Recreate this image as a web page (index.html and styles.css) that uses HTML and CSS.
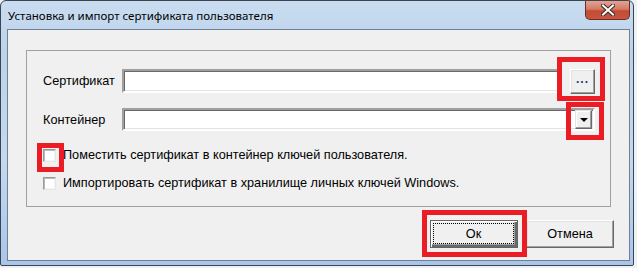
FILE: index.html
```html
<!DOCTYPE html>
<html lang="ru">
<head>
  <meta charset="UTF-8" />
  <title>Установка и импорт сертификата пользователя</title>
  <link rel="stylesheet" href="styles.css">
</head>
<body>
  <div class="window">
    <div class="titlebar">
      <span class="title">Установка и импорт сертификата пользователя</span>
      <div class="close-btn">
        <svg width="14" height="12" viewBox="0 0 14 12">
          <path d="M2 1.5 L12 10.5 M12 1.5 L2 10.5" stroke="#3b2a26" stroke-width="4" stroke-linecap="square" />
          <path d="M2 1.5 L12 10.5 M12 1.5 L2 10.5" stroke="#fff" stroke-width="2" stroke-linecap="square" />
        </svg>
      </div>
    </div>

    <div class="client">
      <div class="group">
        <div class="row">
          <label class="label">Сертификат</label>
          <div class="field"></div>
          <div class="btn-browse">...</div>
        </div>
        <div class="row row-combo">
          <label class="label">Контейнер</label>
          <div class="field combo">
            <div class="combo-arrow"><span class="tri"></span></div>
          </div>
        </div>
        <div class="check-row first">
          <span class="checkbox"></span>
          <span class="check-text">Поместить сертификат в контейнер ключей пользователя.</span>
        </div>
        <div class="check-row">
          <span class="checkbox"></span>
          <span class="check-text">Импортировать сертификат в хранилище личных ключей Windows.</span>
        </div>
      </div>

      <div class="buttons">
        <div class="btn btn-default"><span class="focus">Ок</span></div>
        <div class="btn">Отмена</div>
      </div>
    </div>

    <!-- красные рамки-пометки -->
    <div class="mark mark-browse"></div>
    <div class="mark mark-combo"></div>
    <div class="mark mark-check"></div>
    <div class="mark mark-ok"></div>
  </div>
</body>
</html>
```

FILE: styles.css
```css
body {
  margin: 0;
  background: #eef2f6;
  font-family: "Liberation Sans", Arial, sans-serif;
  font-size: 12.7px;
  color: #000;
}
.window {
  position: relative;
  width: 634px;
  height: 266px;
  box-sizing: border-box;
  border: 1px solid #3c4450;
  border-radius: 6px 6px 2px 2px;
  padding: 0 3px 4px 6px;
  background: linear-gradient(180deg, #c9dcf0 0%, #bcd3ec 20%, #c4d9f0 60%, #a9c6ea 100%);
  display: flex;
  flex-direction: column;
}
.titlebar {
  height: 28px;
  display: flex;
  align-items: flex-start;
  justify-content: space-between;
  flex-shrink: 0;
}
.title {
  margin: 8px 0 0 1px;
  font-family: "Noto Sans", "Liberation Sans", sans-serif;
  font-size: 11.5px;
  line-height: 14px;
}
.close-btn {
  width: 45px;
  height: 19px;
  box-sizing: border-box;
  border: 1px solid #6b2c22;
  border-top: none;
  border-radius: 0 0 5px 5px;
  background: linear-gradient(180deg, #e4a394 0%, #d47a66 45%, #c24b33 55%, #c8553c 100%);
  display: flex;
  align-items: center;
  justify-content: center;
}
.client {
  flex: 1;
  border: 1px solid #6f8096;
  background: #f0f0f0;
  display: flex;
  flex-direction: column;
}
.group {
  margin: 20px 18px 0 18px;
  border: 1px solid #a0a0a0;
  padding: 18px 15px 13px 16px;
}
.row {
  display: flex;
  align-items: center;
  height: 24px;
}
.row-combo {
  margin-top: 15px;
  height: 23px;
}
.label {
  width: 79px;
  flex-shrink: 0;
}
.field {
  flex: 1;
  height: 100%;
  box-sizing: border-box;
  background: #fff;
  border: 2px solid;
  border-color: #a0a0a0 #fff #fff #a0a0a0;
  box-shadow: inset 1px 1px 0 #696969, inset -1px -1px 0 #e3e3e3;
}
.combo {
  display: flex;
  justify-content: flex-end;
  align-items: center;
  padding: 0 1px 0 0;
}
.btn-browse {
  width: 25px;
  height: 25px;
  box-sizing: border-box;
  margin-left: 10px;
  background: #f0f0f0;
  border: 1px solid;
  border-color: #fff #696969 #696969 #fff;
  box-shadow: inset -1px -1px 0 #a0a0a0, inset 1px 1px 0 #e3e3e3;
  text-align: center;
  font-size: 12px;
  font-weight: bold;
  line-height: 18px;
  color: #1a3a6e;
  letter-spacing: 1px;
}
.combo-arrow {
  width: 17px;
  height: 19px;
  box-sizing: border-box;
  background: #f0f0f0;
  border: 1px solid;
  border-color: #e3e3e3 #696969 #696969 #e3e3e3;
  box-shadow: inset -1px -1px 0 #a0a0a0, inset 1px 1px 0 #fff;
  display: flex;
  align-items: center;
  justify-content: center;
}
.tri {
  width: 0;
  height: 0;
  border-left: 4px solid transparent;
  border-right: 4px solid transparent;
  border-top: 4px solid #000;
  margin-top: 1px;
}
.check-row {
  display: flex;
  align-items: center;
  height: 20px;
  margin-top: 8px;
}
.check-row.first {
  margin-top: 14px;
}
.checkbox {
  width: 13px;
  height: 13px;
  box-sizing: border-box;
  margin-right: 7px;
  background: #fff;
  border: 1px solid;
  border-color: #9a9a9a #e6e6e6 #e6e6e6 #9a9a9a;
  box-shadow: inset 1px 1px 0 #b9b9b9, inset -1px -1px 0 #f4f4f4;
}
.buttons {
  display: flex;
  justify-content: flex-end;
  gap: 8px;
  margin-top: 13px;
  padding-right: 15px;
}
.btn {
  width: 88px;
  height: 28px;
  box-sizing: border-box;
  background: #f0f0f0;
  border: 1px solid;
  border-color: #fff #696969 #696969 #fff;
  box-shadow: inset -1px -1px 0 #a0a0a0, inset 1px 1px 0 #e3e3e3;
  display: flex;
  align-items: center;
  justify-content: center;
}
.btn-default {
  border-color: #646464;
  box-shadow: inset 1px 1px 0 #fff, inset -2px -2px 0 #696969, inset -3px -3px 0 #a0a0a0;
  padding: 2px 3px 3px 2px;
}
.focus {
  flex: 1;
  align-self: stretch;
  border: 1px dotted #000;
  display: flex;
  align-items: center;
  justify-content: center;
}
.mark {
  position: absolute;
  box-sizing: border-box;
  border: 5px solid #ec1c24;
}
.mark-browse { left: 556px; top: 56px; width: 48px; height: 44px; }
.mark-combo { left: 565px; top: 101px; width: 38px; height: 38px; }
.mark-check { left: 36px; top: 142px; width: 27px; height: 29px; }
.mark-ok { left: 421px; top: 209px; width: 105px; height: 47px; }
```
